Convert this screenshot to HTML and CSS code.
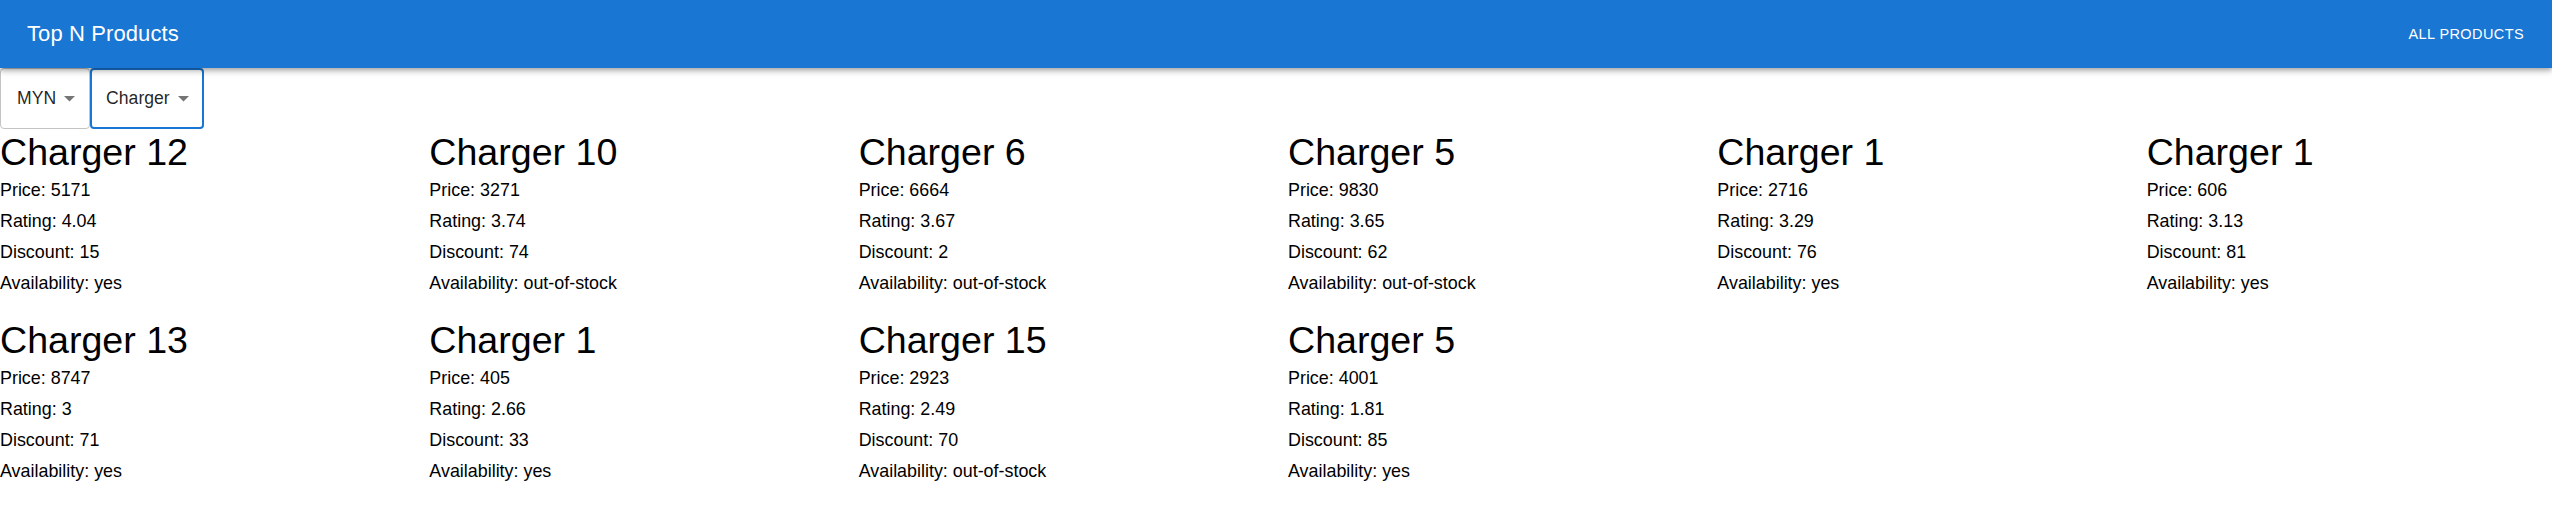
FILE: index.html
```html
<!DOCTYPE html>
<html lang="en">
<head>
<meta charset="utf-8">
<title>Top N Products</title>
<link rel="stylesheet" href="styles.css">
</head>
<body>
<header class="appbar">
  <div class="title">Top N Products</div>
  <a class="nav-btn">ALL PRODUCTS</a>
</header>
<div class="filters">
  <div class="select">
    <span class="select-value">MYN</span>
    <svg class="arrow" viewBox="0 0 10 5" width="11" height="5.5"><path d="M0 0l5 5 5-5z" fill="#757575"/></svg>
  </div>
  <div class="select focused">
    <span class="select-value">Charger</span>
    <svg class="arrow" viewBox="0 0 10 5" width="11" height="5.5"><path d="M0 0l5 5 5-5z" fill="#757575"/></svg>
  </div>
</div>
<main class="grid">
  <div class="item"><h4 class="name">Charger 12</h4><p class="line">Price: 5171</p><p class="line">Rating: 4.04</p><p class="line">Discount: 15</p><p class="line">Availability: yes</p></div>
  <div class="item"><h4 class="name">Charger 10</h4><p class="line">Price: 3271</p><p class="line">Rating: 3.74</p><p class="line">Discount: 74</p><p class="line">Availability: out-of-stock</p></div>
  <div class="item"><h4 class="name">Charger 6</h4><p class="line">Price: 6664</p><p class="line">Rating: 3.67</p><p class="line">Discount: 2</p><p class="line">Availability: out-of-stock</p></div>
  <div class="item"><h4 class="name">Charger 5</h4><p class="line">Price: 9830</p><p class="line">Rating: 3.65</p><p class="line">Discount: 62</p><p class="line">Availability: out-of-stock</p></div>
  <div class="item"><h4 class="name">Charger 1</h4><p class="line">Price: 2716</p><p class="line">Rating: 3.29</p><p class="line">Discount: 76</p><p class="line">Availability: yes</p></div>
  <div class="item"><h4 class="name">Charger 1</h4><p class="line">Price: 606</p><p class="line">Rating: 3.13</p><p class="line">Discount: 81</p><p class="line">Availability: yes</p></div>
  <div class="item"><h4 class="name">Charger 13</h4><p class="line">Price: 8747</p><p class="line">Rating: 3</p><p class="line">Discount: 71</p><p class="line">Availability: yes</p></div>
  <div class="item"><h4 class="name">Charger 1</h4><p class="line">Price: 405</p><p class="line">Rating: 2.66</p><p class="line">Discount: 33</p><p class="line">Availability: yes</p></div>
  <div class="item"><h4 class="name">Charger 15</h4><p class="line">Price: 2923</p><p class="line">Rating: 2.49</p><p class="line">Discount: 70</p><p class="line">Availability: out-of-stock</p></div>
  <div class="item"><h4 class="name">Charger 5</h4><p class="line">Price: 4001</p><p class="line">Rating: 1.81</p><p class="line">Discount: 85</p><p class="line">Availability: yes</p></div>
</main>
</body>
</html>
```

FILE: styles.css
```css
html, body {
  margin: 0;
  padding: 0;
  background: #fff;
}
body {
  font-family: "Liberation Sans", Arial, Helvetica, sans-serif;
  color: rgba(0, 0, 0, 0.87);
  overflow: hidden;
}
.appbar {
  position: relative;
  z-index: 2;
  height: 68px;
  box-sizing: border-box;
  background: #1976d2;
  color: #fff;
  display: flex;
  align-items: center;
  justify-content: space-between;
  padding: 0 20px 0 27px;
  box-shadow: 0px 2px 4px -1px rgba(0,0,0,0.2), 0px 4px 5px 0px rgba(0,0,0,0.14), 0px 1px 10px 0px rgba(0,0,0,0.12);
}
.title {
  font-size: 22px;
  line-height: 1.2;
  letter-spacing: 0.1px;
}
.nav-btn {
  font-size: 14.5px;
  letter-spacing: 0.4px;
  padding: 6px 8px;
  color: #fff;
  text-transform: uppercase;
}
.filters {
  display: flex;
}
.select {
  box-sizing: border-box;
  height: 61px;
  display: flex;
  align-items: center;
  padding: 0 14px 0 16px;
  gap: 8px;
  border: 1px solid #c4c4c4;
  border-radius: 4px;
  font-size: 17.6px;
}
.select.focused {
  border: 2px solid #1976d2;
  padding: 0 13px 0 14px;
}
.arrow {
  display: block;
  margin-top: 1px;
}
.grid {
  display: grid;
  grid-template-columns: repeat(6, 1fr);
  row-gap: 18px;
  margin-left: -24px;
  width: calc(100% + 24px);
}
.item {
  padding-left: 24px;
  min-width: 0;
}
.name {
  margin: 0;
  font-size: 37.6px;
  font-weight: 400;
  line-height: 46px;
  color: #000;
  white-space: nowrap;
}
.line {
  margin: 0;
  font-size: 17.9px;
  line-height: 31px;
  color: #000;
  white-space: nowrap;
}
```
